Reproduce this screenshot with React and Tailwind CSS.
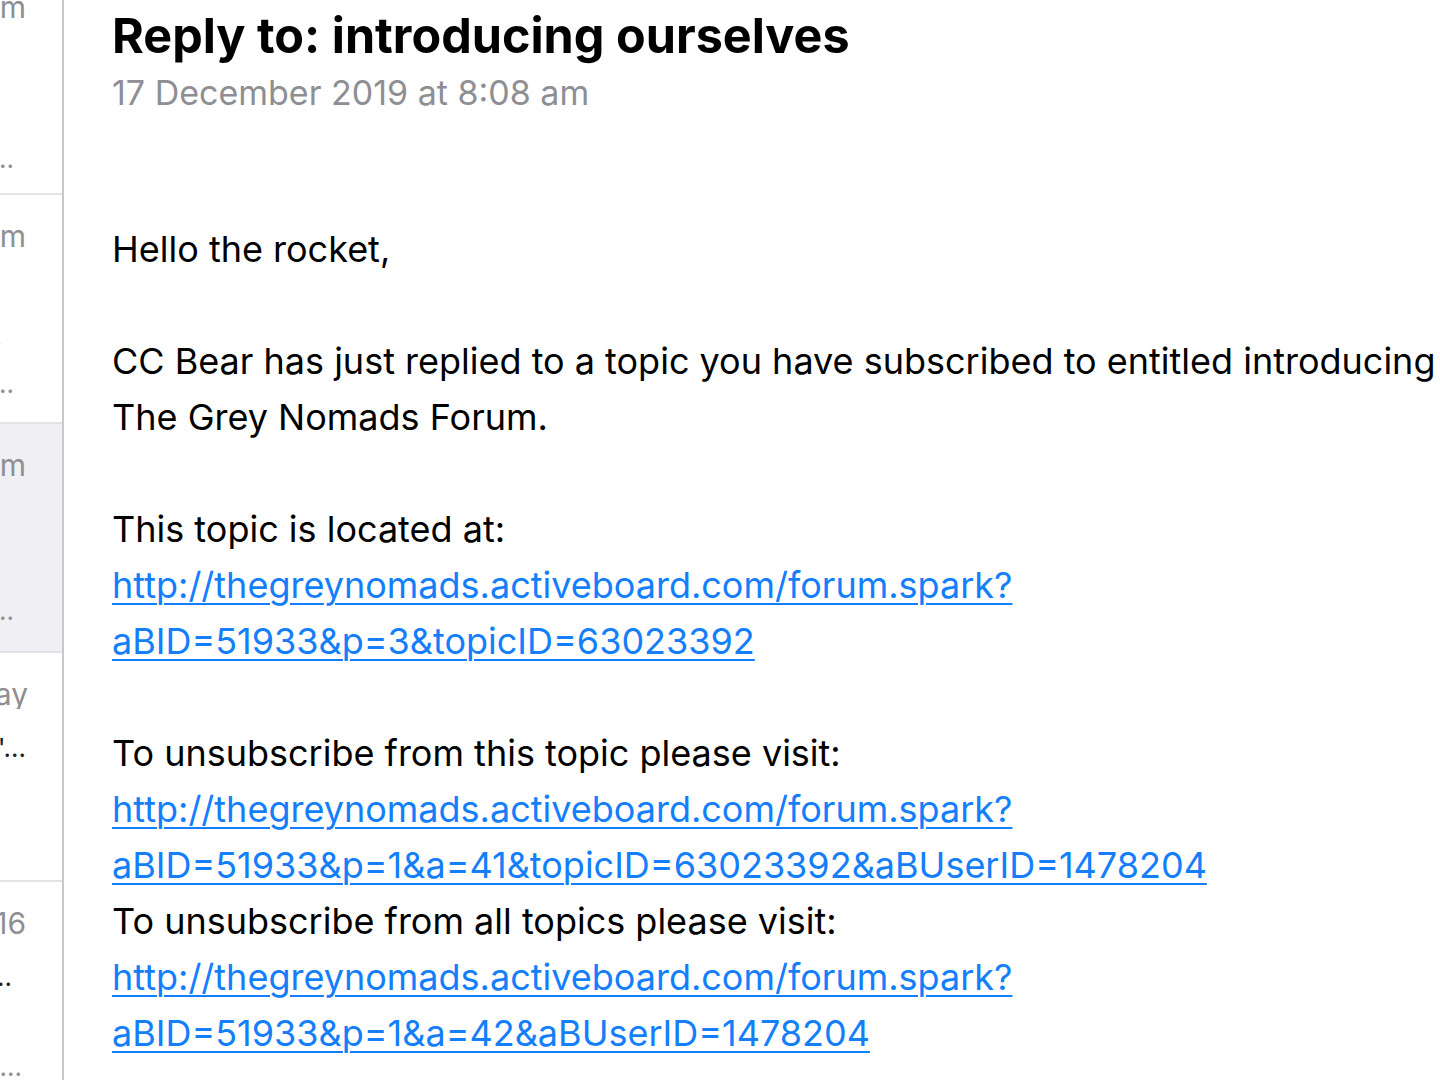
import React from "react";

const font = { fontFamily: "Inter, 'Noto Sans', sans-serif" };

function Line({ text, pr = 0, top, color = "text-[#8e8e93]", size = "text-[28px]" }) {
  return (
    <div
      className={`absolute left-0 right-0 flex justify-end overflow-hidden whitespace-nowrap leading-none ${color} ${size}`}
      style={{ top, paddingRight: pr }}
    >
      {text}
    </div>
  );
}

function Row({ h, selected, children, border = true }) {
  return (
    <div
      className={`relative shrink-0 ${selected ? "bg-[#efeff4]" : "bg-white"} ${border ? "border-b-2 border-[#e3e3e6]" : ""}`}
      style={{ height: h }}
    >
      {children}
    </div>
  );
}

export default function App() {
  const link = "text-[#147efb] underline decoration-[2px] underline-offset-[5px]";
  return (
    <div className="flex h-[1080px] w-[1440px] overflow-hidden bg-white" style={font}>
      <aside className="flex w-[64px] shrink-0 flex-col overflow-hidden border-r-2 border-[#c8c7cc] bg-white">
        <Row h={195}>
          <Line text="8:07 am" pr={36} top={-8} size="text-[30px]" />
          <Line text="Hello the rocket.." pr={48} top={146} size="text-[26px]" />
        </Row>
        <Row h={229}>
          <Line text="8:08 am" pr={36} top={26} size="text-[30px]" />
          <Line text="Reply to: intro ." pr={60} top={128} size="text-[26px]" />
          <Line text="Hello the rocket.." pr={48} top={176} size="text-[26px]" />
        </Row>
        <Row h={229} selected>
          <Line text="8:08 am" pr={36} top={26} size="text-[30px]" />
          <Line text="Hello the rocket, ..." pr={48} top={174} size="text-[26px]" />
        </Row>
        <Row h={229}>
          <Line text="Yesterday" pr={34} top={26} size="text-[30px]" />
          <Line text="Subject of '..." pr={36} top={82} color="text-[#1c1c1e]" size="text-[26px]" />
        </Row>
        <Row h={229} border={false}>
          <Line text="15/12/16" pr={36} top={26} size="text-[30px]" />
          <Line text="Grey Nomads .." pr={50} top={82} color="text-[#1c1c1e]" size="text-[26px]" />
          <Line text="Hello the rocket, ..." pr={40} top={172} size="text-[26px]" />
        </Row>
      </aside>

      <main className="min-w-0 flex-1 overflow-hidden pl-[48px] pt-[5px] text-black">
        <h1 className="whitespace-nowrap text-[48.5px] font-bold leading-[62px]">
          Reply to: introducing ourselves
        </h1>
        <div className="whitespace-nowrap text-[34px] leading-[52px] text-[#8e8e93]">
          17 December 2019 at 8:08 am
        </div>
        <div className="mt-[102px] whitespace-nowrap text-[36px] leading-[56px]">
          <div>Hello the rocket,</div>
          <div className="h-[56px]" />
          <div>CC Bear has just replied to a topic you have subscribed to entitled introducing ourselves at</div>
          <div>The Grey Nomads Forum.</div>
          <div className="h-[56px]" />
          <div>This topic is located at:</div>
          <div><span className={link}>http://thegreynomads.activeboard.com/forum.spark?</span></div>
          <div><span className={link}>aBID=51933&amp;p=3&amp;topicID=63023392</span></div>
          <div className="h-[56px]" />
          <div>To unsubscribe from this topic please visit:</div>
          <div><span className={link}>http://thegreynomads.activeboard.com/forum.spark?</span></div>
          <div><span className={link}>aBID=51933&amp;p=1&amp;a=41&amp;topicID=63023392&amp;aBUserID=1478204</span></div>
          <div>To unsubscribe from all topics please visit:</div>
          <div><span className={link}>http://thegreynomads.activeboard.com/forum.spark?</span></div>
          <div><span className={link}>aBID=51933&amp;p=1&amp;a=42&amp;aBUserID=1478204</span></div>
        </div>
      </main>
    </div>
  );
}
